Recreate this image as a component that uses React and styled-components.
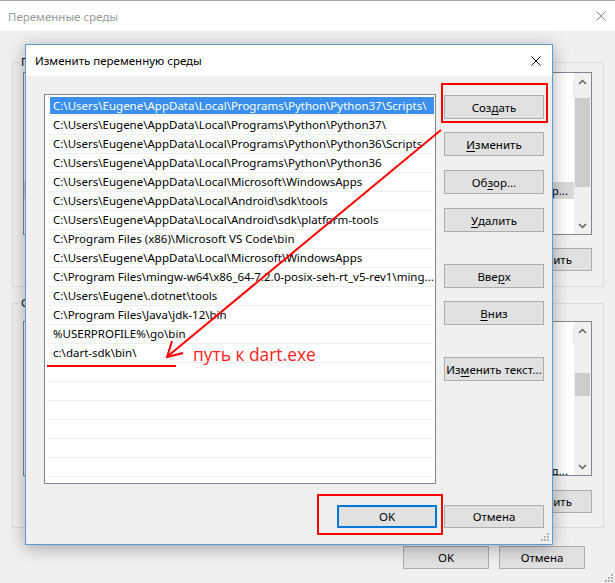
import React from 'react';
import styled, { createGlobalStyle } from 'styled-components';

const UI_FONT = `"Noto Sans", "Segoe UI", sans-serif`;

const GlobalStyle = createGlobalStyle`
  html, body {
    margin: 0;
    padding: 0;
  }
  body {
    width: 615px;
    height: 583px;
    overflow: hidden;
    background: #f0f0f0;
    font-family: ${UI_FONT};
    font-size: 11.5px;
    color: #000;
  }
  * {
    box-sizing: border-box;
  }
`;

const Screen = styled.div`
  position: relative;
  width: 615px;
  height: 583px;
  overflow: hidden;
  background: #f0f0f0;
`;

/* ---------- фоновое окно "Переменные среды" ---------- */

const Window = styled.div`
  display: flex;
  flex-direction: column;
  height: 100%;
  border-top: 1px solid #a8a8a8;
`;

const TitleBar = styled.div`
  display: flex;
  align-items: center;
  justify-content: space-between;
  height: ${(p) => p.$height}px;
  padding: 0 ${(p) => p.$padRight}px 0 ${(p) => p.$padLeft}px;
  background: #fff;
  color: ${(p) => (p.$inactive ? '#9a9a9a' : '#000')};
  font-size: 11.5px;
  flex-shrink: 0;
`;

const WinBody = styled.div`
  display: flex;
  flex-direction: column;
  padding: 0 11px 0 12px;
`;

const GroupBox = styled.div`
  position: relative;
  display: flex;
  flex-direction: column;
  height: 225px;
  margin-top: ${(p) => p.$mt}px;
  padding: ${(p) => p.$pt}px 11px 0 10px;
  border: 1px solid #dcdcdc;
`;

const GroupLabel = styled.span`
  position: absolute;
  top: -9px;
  left: 6px;
  padding: 0 2px;
  background: #f0f0f0;
  line-height: 16px;
`;

const ListView = styled.div`
  display: flex;
  height: ${(p) => p.$height}px;
  border: 1px solid #828790;
  background: #fff;
`;

const ListContent = styled.div`
  flex: 1;
  min-width: 0;
  display: flex;
  flex-direction: column;
  overflow: hidden;
`;

const ListHeader = styled.div`
  display: flex;
  height: ${(p) => p.$height}px;
  flex-shrink: 0;
`;

const HeaderCell = styled.div`
  display: flex;
  align-items: center;
  padding-left: 6px;
  width: ${(p) => p.$width || 'auto'};
  flex: ${(p) => (p.$width ? '0 0 auto' : '1')};
  border-right: 1px solid #e5e5e5;
  margin-top: 7px;
`;

const VarRow = styled.div`
  display: flex;
  height: 17px;
  line-height: 17px;
  flex-shrink: 0;
  background: ${(p) => (p.$selected ? '#d9d9d9' : 'transparent')};
  white-space: nowrap;
`;

const VarName = styled.div`
  width: 150px;
  padding-left: 6px;
  flex-shrink: 0;
  overflow: hidden;
`;

const VarValue = styled.div`
  flex: 1;
  min-width: 0;
  display: flex;
  justify-content: ${(p) => (p.$clipped ? 'flex-end' : 'flex-start')};
  padding: 0 6px;
  overflow: hidden;
`;

const ScrollBar = styled.div`
  display: flex;
  flex-direction: column;
  width: 17px;
  flex-shrink: 0;
  background: #f0f0f0;
`;

const ScrollArrow = styled.div`
  display: flex;
  align-items: center;
  justify-content: center;
  height: 17px;
  flex-shrink: 0;
`;

const ScrollTrack = styled.div`
  flex: 1;
  padding: 0 1px;
`;

const ScrollThumb = styled.div`
  margin-top: ${(p) => p.$offset}px;
  height: ${(p) => p.$size}px;
  background: #cdcdcd;
`;

const ButtonRow = styled.div`
  display: flex;
  justify-content: flex-end;
  gap: ${(p) => p.$gap}px;
  margin-top: ${(p) => p.$mt}px;
`;

const Button = styled.button`
  display: flex;
  align-items: center;
  justify-content: center;
  width: ${(p) => p.$width}px;
  height: ${(p) => p.$height || 23}px;
  margin-top: ${(p) => p.$mt || 0}px;
  padding: 0;
  flex-shrink: 0;
  background: #e1e1e1;
  border: ${(p) => (p.$default ? '2px solid #0078d7' : '1px solid #adadad')};
  font-family: ${UI_FONT};
  font-size: 11.5px;
  color: #000;
  white-space: nowrap;

  u {
    text-decoration-thickness: 1px;
    text-underline-offset: 2px;
  }
`;

const Footer = styled.div`
  display: flex;
  justify-content: flex-end;
  gap: 10px;
  margin-top: 18px;
  padding-right: 19px;
`;

/* ---------- диалог "Изменить переменную среды" ---------- */

const Dialog = styled.div`
  position: absolute;
  left: 25px;
  top: 44px;
  width: 528px;
  height: 501px;
  display: flex;
  flex-direction: column;
  border: 1px solid #5b9bd8;
  background: #f0f0f0;
  box-shadow: 0 3px 16px rgba(0, 0, 0, 0.33);
`;

const DialogBody = styled.div`
  flex: 1;
  display: flex;
  flex-direction: column;
  padding: 18px 8px 0 18px;
`;

const MainRow = styled.div`
  display: flex;
  gap: 8px;
`;

const PathList = styled.div`
  display: flex;
  flex-direction: column;
  width: 392px;
  height: 390px;
  padding: 2px 1px 0 2px;
  border: 1px solid #828790;
  background: #fff;
  overflow: hidden;
`;

const PathRow = styled.div`
  height: 19px;
  flex-shrink: 0;
  border-bottom: 1px solid #f0f0f0;
`;

const PathText = styled.div`
  height: 17px;
  margin-left: 3px;
  padding-left: 3px;
  line-height: 17px;
  white-space: nowrap;
  overflow: hidden;
  background: ${(p) => (p.$selected ? '#3b8ff0' : 'transparent')};
  color: ${(p) => (p.$selected ? '#fff' : '#000')};
`;

const SideButtons = styled.div`
  display: flex;
  flex-direction: column;
  width: 100px;
  padding-top: 1px;
`;

const DialogFooter = styled.div`
  display: flex;
  justify-content: flex-end;
  gap: 7px;
  margin-top: 21px;
`;

const Grip = styled.svg`
  position: absolute;
  right: ${(p) => p.$r}px;
  bottom: ${(p) => p.$b}px;
`;

/* ---------- красные пометки ---------- */

const Markup = styled.svg`
  position: absolute;
  left: 0;
  top: 0;
  pointer-events: none;
`;

const Note = styled.span`
  position: absolute;
  left: 193px;
  top: 344px;
  font-family: "Open Sans", "DejaVu Sans", sans-serif;
  font-size: 17.4px;
  line-height: 20px;
  color: #ff1e1e;
  white-space: nowrap;
`;

const CloseIcon = ({ color, size = 10 }) => (
  <svg width={size} height={size} viewBox="0 0 10 10">
    <path d="M0.5 0.5 L9.5 9.5 M9.5 0.5 L0.5 9.5" stroke={color} strokeWidth="1" fill="none" />
  </svg>
);

const Chevron = ({ up }) => (
  <svg width="9" height="6" viewBox="0 0 9 6">
    <polyline
      points={up ? '1,5 4.5,1.5 8,5' : '1,1 4.5,4.5 8,1'}
      stroke="#606060"
      strokeWidth="1.5"
      fill="none"
    />
  </svg>
);

const GripDots = ({ r, b }) => (
  <Grip $r={r} $b={b} width="9" height="9" viewBox="0 0 9 9">
    {[
      [7, 1],
      [4, 4],
      [7, 4],
      [1, 7],
      [4, 7],
      [7, 7],
    ].map(([x, y]) => (
      <rect key={`${x}-${y}`} x={x} y={y} width="2" height="2" fill="#b4b4b4" />
    ))}
  </Grip>
);

// [имя, значение, обрезано ли значение справа]
const userVars = [
  ['ChocolateyLastPathUpdate', '1320123456789', false],
  ['GOPATH', '%USERPROFILE%\\go', false],
  ['OneDrive', 'C:\\Users\\Eugene\\OneDrive', false],
  ['TEMP', '%USERPROFILE%\\AppData\\Local\\Temp', false],
  ['TMP', '%USERPROFILE%\\AppData\\Local\\Temp', false],
  ['Path', 'C:\\Users\\Eugene\\AppData\\Local\\Programs\\Python\\Python37\\Scripts\\;C:\\Users\\Eugene\\AppData\\Local\\Temp...', true],
  ['VS140COMNTOOLS', 'C:\\Program Files (x86)\\', false],
];

const sysVars = [
  ['ComSpec', 'C:\\WINDOWS\\system32\\cmd.exe', false],
  ['DriverData', 'C:\\Windows\\System32\\Drivers', false],
  ['JAVA_HOME', 'C:\\Program Files\\Java\\jdk-12', false],
  ['NUMBER_OF_PROCESSORS', '4', false],
  ['OS', 'Windows_NT', false],
  ['PATHEXT', '.COM;.EXE;.BAT;.CMD;.VBS', false],
  ['PROCESSOR_ARCHITECTURE', 'AMD64', false],
  ['PROCESSOR_IDENTIFIER', 'Intel64 Family 6 Model 58 Stepping 9, GenuineIntel, Кол-во ядер 4 и потоков д...', true],
];

const paths = [
  'C:\\Users\\Eugene\\AppData\\Local\\Programs\\Python\\Python37\\Scripts\\',
  'C:\\Users\\Eugene\\AppData\\Local\\Programs\\Python\\Python37\\',
  'C:\\Users\\Eugene\\AppData\\Local\\Programs\\Python\\Python36\\Scripts',
  'C:\\Users\\Eugene\\AppData\\Local\\Programs\\Python\\Python36',
  'C:\\Users\\Eugene\\AppData\\Local\\Microsoft\\WindowsApps',
  'C:\\Users\\Eugene\\AppData\\Local\\Android\\sdk\\tools',
  'C:\\Users\\Eugene\\AppData\\Local\\Android\\sdk\\platform-tools',
  'C:\\Program Files (x86)\\Microsoft VS Code\\bin',
  'C:\\Users\\Eugene\\AppData\\Local\\Microsoft\\WindowsApps',
  'C:\\Program Files\\mingw-w64\\x86_64-7.2.0-posix-seh-rt_v5-rev1\\ming...',
  'C:\\Users\\Eugene\\.dotnet\\tools',
  'C:\\Program Files\\Java\\jdk-12\\bin',
  '%USERPROFILE%\\go\\bin',
  'c:\\dart-sdk\\bin\\',
  '', '', '', '', '', '', '',
];

// кнопки справа от списка: [текст до, подчёркнутая буква, текст после, отступ сверху]
const sideButtons = [
  ['Соз', 'д', 'ать', 0],
  ['', 'И', 'зменить', 13],
  ['Об', 'з', 'ор...', 14],
  ['', 'У', 'далить', 14],
  ['Вве', 'р', 'х', 32],
  ['', 'В', 'низ', 13],
  ['Из', 'м', 'енить текст...', 32],
];

const VarList = ({ vars, height, headerHeight, selected, thumbOffset, thumbSize }) => (
  <ListView $height={height}>
    <ListContent>
      <ListHeader $height={headerHeight}>
        <HeaderCell $width="150px">Переменная</HeaderCell>
        <HeaderCell>Значение</HeaderCell>
      </ListHeader>
      {vars.map(([name, value, clipped], i) => (
        <VarRow key={name} $selected={i === selected}>
          <VarName>{name}</VarName>
          <VarValue $clipped={clipped}>{value}</VarValue>
        </VarRow>
      ))}
    </ListContent>
    <ScrollBar>
      <ScrollArrow>
        <Chevron up />
      </ScrollArrow>
      <ScrollTrack>
        <ScrollThumb $offset={thumbOffset} $size={thumbSize} />
      </ScrollTrack>
      <ScrollArrow>
        <Chevron />
      </ScrollArrow>
    </ScrollBar>
  </ListView>
);

const App = () => {
  return (
    <Screen>
      <GlobalStyle />
      <Window>
        <TitleBar $height={30} $padLeft={8} $padRight={9} $inactive>
          <span>Переменные среды</span>
          <CloseIcon color="#8a8a8a" />
        </TitleBar>
        <WinBody>
          <GroupBox $mt={31} $pt={9}>
            <GroupLabel>Переменные среды пользователя для Eugene</GroupLabel>
            <VarList
              vars={userVars}
              height={163}
              headerHeight={24}
              selected={5}
              thumbOffset={8}
              thumbSize={89}
            />
            <ButtonRow $gap={8} $mt={13}>
              <Button $width={85}>Создать...</Button>
              <Button $width={85}>Изменить...</Button>
              <Button $width={85}>Удалить</Button>
            </ButtonRow>
          </GroupBox>
          <GroupBox $mt={16} $pt={17}>
            <GroupLabel>Системные переменные</GroupLabel>
            <VarList
              vars={sysVars}
              height={155}
              headerHeight={21}
              selected={-1}
              thumbOffset={34}
              thumbSize={23}
            />
            <ButtonRow $gap={8} $mt={14}>
              <Button $width={85}>Создать...</Button>
              <Button $width={85}>Изменить...</Button>
              <Button $width={85}>Удалить</Button>
            </ButtonRow>
          </GroupBox>
          <Footer>
            <Button $width={86}>OK</Button>
            <Button $width={86}>Отмена</Button>
          </Footer>
        </WinBody>
      </Window>
      <GripDots r={2} b={1} />

      <Dialog>
        <TitleBar $height={31} $padLeft={9} $padRight={11}>
          <span>Изменить переменную среды</span>
          <CloseIcon color="#111" />
        </TitleBar>
        <DialogBody>
          <MainRow>
            <PathList>
              {paths.map((p, i) => (
                <PathRow key={i}>
                  <PathText $selected={i === 0}>{p}</PathText>
                </PathRow>
              ))}
            </PathList>
            <SideButtons>
              {sideButtons.map(([before, key, after, mt]) => (
                <Button key={before + key + after} $width={100} $height={24} $mt={mt}>
                  {before}
                  <u>{key}</u>
                  {after}
                </Button>
              ))}
            </SideButtons>
          </MainRow>
          <DialogFooter>
            <Button $width={100} $height={23} $default>
              OK
            </Button>
            <Button $width={100} $height={23}>
              Отмена
            </Button>
          </DialogFooter>
        </DialogBody>
        <GripDots r={3} b={3} />
      </Dialog>

      <Markup width="615" height="583" viewBox="0 0 615 583">
        <g stroke="#ff0000" strokeWidth="2" fill="none">
          <rect x="442" y="84" width="105" height="38" />
          <rect x="318" y="495" width="124" height="39" />
          <line x1="441" y1="130" x2="168" y2="356" />
          <polyline points="172,341 167,357 183,353" />
          <line x1="47" y1="366" x2="176" y2="366" />
        </g>
      </Markup>
      <Note>путь к dart.exe</Note>
    </Screen>
  );
};

export default App;
